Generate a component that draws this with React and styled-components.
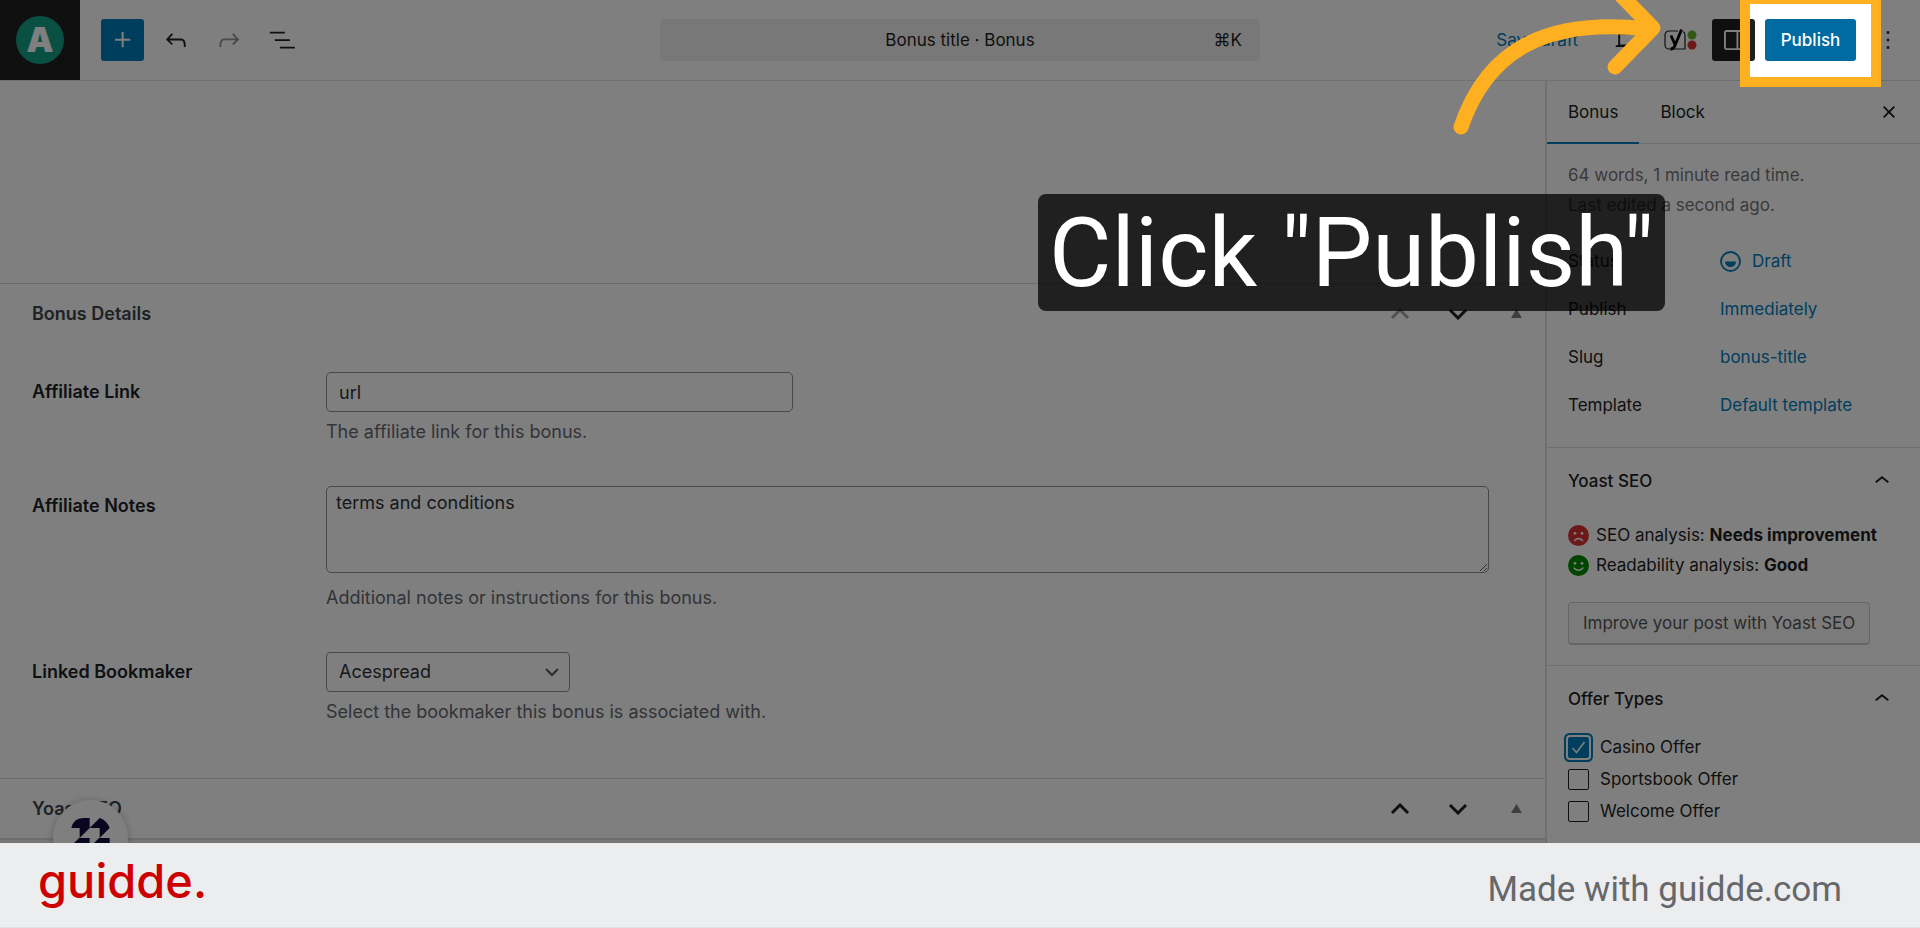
import React from "react";
import styled, { createGlobalStyle } from "styled-components";

const GlobalStyle = createGlobalStyle`
  *, *::before, *::after { box-sizing: border-box; }
  body {
    margin: 0;
    font-family: Inter, "Liberation Sans", sans-serif;
    font-size: 17px;
    line-height: 24px;
    color: #1e1e1e;
    background: #fff;
  }
  button, input, textarea, select { font: inherit; color: inherit; margin: 0; }
  h2, p, ul, dl, dd { margin: 0; padding: 0; }
`;

const Page = styled.div`
  display: flex;
  flex-direction: column;
  height: 100vh;
  min-height: 600px;
  overflow: hidden;
`;

const Editor = styled.div`
  position: relative;
  flex: 1;
  min-height: 0;
  display: flex;
  flex-direction: column;
  overflow: hidden;
`;

/* Top bar */
const TopBar = styled.header`
  display: grid;
  grid-template-columns: 1fr minmax(300px, 600px) 1fr;
  align-items: center;
  flex: none;
  height: 81px;
  border-bottom: 1px solid #e0e0e0;
`;

const Tools = styled.div`
  display: flex;
  align-items: center;
  gap: 10px;
  justify-content: ${(p) => (p.$end ? "flex-end" : "flex-start")};
  padding-right: ${(p) => (p.$end ? "11px" : "0")};
`;

const SiteLogo = styled.a`
  display: grid;
  place-items: center;
  width: 80px;
  height: 80px;
  margin-right: 11px;
  background: #1e1e1e;
  text-decoration: none;
`;

const SiteInitial = styled.span`
  display: grid;
  place-items: center;
  width: 48px;
  height: 48px;
  border-radius: 50%;
  background: #14a085;
  color: #fff;
  font: 900 34px/48px Inter, sans-serif;
`;

const ToolButton = styled.button`
  display: grid;
  place-items: center;
  width: 43px;
  height: 42px;
  padding: 0;
  border: 0;
  border-radius: 3px;
  background: ${(p) => p.$bg || "transparent"};
  color: ${(p) => p.$color || "#1e1e1e"};
`;

const CommandBar = styled.button`
  display: grid;
  grid-template-columns: 60px 1fr 60px;
  align-items: center;
  height: 42px;
  padding: 0 10px;
  border: 0;
  border-radius: 5px;
  background: #f0f0f0;
`;

const CommandHint = styled.span`
  text-align: right;
  padding-right: 8px;
  font-family: Inter, "DejaVu Sans", sans-serif;
`;

const LinkButton = styled.button`
  padding: ${(p) => p.$pad || "0"};
  border: 0;
  background: transparent;
  color: #007cba;
  display: flex;
  align-items: center;
  gap: 11px;
  white-space: nowrap;
`;

const PublishAnchor = styled.div`
  position: relative;
`;

const PublishButton = styled.button`
  display: block;
  width: 91px;
  height: 42px;
  padding: 0;
  border: 0;
  border-radius: 3px;
  background: #006ba1;
  color: #fff;
  font-weight: 500;
`;

/* Walkthrough layer: the spread shadow dims everything but the target */
const Spotlight = styled.div`
  position: absolute;
  z-index: 5;
  inset: -25px -25px -26px;
  border: 10px solid #ffb020;
  box-shadow: 0 0 0 4000px rgba(0, 0, 0, 0.5);
  pointer-events: none;
`;

const Arrow = styled.svg`
  position: absolute;
  z-index: 6;
  right: 176px;
  top: -19px;
  width: 240px;
  height: 140px;
  pointer-events: none;
`;

const Callout = styled.div`
  position: absolute;
  z-index: 6;
  right: 191px;
  top: 175px;
  padding: 2px 11px 0;
  border-radius: 8px;
  background: rgba(0, 0, 0, 0.75);
  color: #fff;
  font: 400 96px/115px Roboto, sans-serif;
  white-space: nowrap;
  pointer-events: none;
`;

/* Columns */
const Columns = styled.div`
  display: grid;
  grid-template-columns: minmax(0, 1fr) 375px;
  flex: 1;
  min-height: 0;
`;

const Main = styled.main`
  display: flex;
  flex-direction: column;
  font-size: 18px;
  min-height: 0;
`;

const Canvas = styled.div`
  flex: none;
  height: 202px;
`;

const Rest = styled.div`
  flex: 1;
  border-top: 2px solid #dcdcde;
  background: #f0f0f1;
`;

const BoxHeader = styled.div`
  display: flex;
  align-items: center;
  flex: none;
  height: 60px;
  padding-left: 32px;
  border-top: 1px solid #d5d6d8;
`;

const BoxTitle = styled.h2`
  flex: 1;
  font-size: 18px;
  font-weight: 600;
  color: #3c434a;
`;

const OrderButton = styled(ToolButton)`
  width: 58px;
`;

const Fields = styled.div`
  display: flex;
  flex-direction: column;
  gap: 42px;
  padding: 29px 56px 54px 32px;
`;

const Field = styled.div`
  display: grid;
  grid-template-columns: 294px minmax(0, 1fr);
`;

const Label = styled.label`
  font-weight: 600;
  line-height: 40px;
  color: #1d2327;
`;

const Control = styled.div`
  display: flex;
  flex-direction: column;
  align-items: flex-start;
  gap: 8px;
`;

const TextInput = styled.input`
  width: 467px;
  height: 40px;
  padding: 0 12px;
  border: 1px solid #8c8f94;
  border-radius: 5px;
  background: #fff;
  color: #2c3338;
`;

const TextArea = styled.textarea`
  width: 100%;
  height: 87px;
  margin-bottom: 5px;
  padding: 4px 9px;
  border: 1px solid #8c8f94;
  border-radius: 5px;
  background: #fff;
  color: #2c3338;
`;

const SelectWrap = styled.div`
  display: grid;
  align-items: center;
  width: 244px;
  & > * { grid-area: 1 / 1; }
  & > svg { justify-self: end; margin-right: 11px; pointer-events: none; }
`;

const Select = styled.select`
  appearance: none;
  width: 100%;
  height: 40px;
  padding: 0 12px;
  border: 1px solid #8c8f94;
  border-radius: 4px;
  background: #fff;
  color: #2c3338;
`;

const Help = styled.p`
  color: #646970;
`;

/* Sidebar */
const Sidebar = styled.aside`
  border-left: 2px solid #e0e0e0;
  background: #fff;
`;

const Tabs = styled.div`
  display: flex;
  align-items: center;
  height: 63px;
  padding-right: 10px;
  border-bottom: 1px solid #ddd;
`;

const Tab = styled.button`
  height: 63px;
  padding: 2px 21px 0;
  border: 0;
  border-bottom: 2px solid ${(p) => (p.$active ? "#007cba" : "transparent")};
  background: transparent;
`;

const Spacer = styled.span`
  flex: 1;
`;

const Summary = styled.section`
  padding: 16px 21px 18px;
`;

const Meta = styled.p`
  line-height: 30px;
  color: #757575;
`;

const Facts = styled.dl`
  display: grid;
  grid-template-columns: 152px 1fr;
  grid-auto-rows: 48px;
  align-items: center;
  margin-top: 17px;
`;

const Panel = styled.section`
  padding: 0 21px ${(p) => p.$bottom || "0"};
  border-top: 1px solid #ddd;
`;

const PanelToggle = styled.button`
  display: flex;
  align-items: center;
  justify-content: space-between;
  width: 100%;
  height: 65px;
  padding: 0 2px 0 0;
  border: 0;
  background: transparent;
  font-weight: 500;
`;

const Score = styled.p`
  display: flex;
  align-items: center;
  gap: 7px;
  line-height: 30px;
  white-space: nowrap;
`;

const ScoreList = styled.div`
  padding: 7px 0 22px;
`;

const ImproveButton = styled.button`
  height: 43px;
  padding: 0 14px;
  border: 1px solid #ccc;
  border-bottom-width: 2px;
  border-radius: 4px;
  background: #f7f7f7;
  color: #555;
  white-space: nowrap;
`;

const Choice = styled.label`
  display: flex;
  align-items: center;
  gap: 11px;
  height: 32px;
`;

const CheckCell = styled.span`
  display: grid;
  place-items: center;
  width: 21px;
  height: 21px;
  & > * { grid-area: 1 / 1; }
  & > svg { pointer-events: none; }
`;

const Checkbox = styled.input`
  appearance: none;
  width: 21px;
  height: 21px;
  border: 1px solid #1e1e1e;
  border-radius: 2px;
  &:checked {
    border-color: #007cba;
    background: #007cba;
    box-shadow: 0 0 0 2px #fff, 0 0 0 4px #007cba;
  }
`;

const HelpBubble = styled.button`
  position: absolute;
  left: 53px;
  bottom: -32px;
  width: 75px;
  height: 75px;
  padding: 0;
  border: 0;
  border-radius: 50%;
  background: #fff;
  box-shadow: 0 1px 8px rgba(0, 0, 0, 0.25);
`;

/* Footer */
const Footer = styled.footer`
  display: flex;
  align-items: center;
  justify-content: space-between;
  flex: none;
  height: 85px;
  padding: 0 78px 0 38px;
  background: #ecedef;
  border-bottom: 1px solid #e0e1e3;
`;

const Brand = styled.a`
  color: #cc0000;
  font: 500 47px/60px Inter, sans-serif;
  text-decoration: none;
  padding-bottom: 8px;
`;

const MadeWith = styled.span`
  color: #66676a;
  font: 400 35px/48px Roboto, sans-serif;
  padding-top: 10px;
`;

const Icon = ({ d, size = 30 }) => (
  <svg width={size} height={size} viewBox="0 0 24 24" fill="currentColor" aria-hidden="true">
    <path d={d} />
  </svg>
);

const ICONS = {
  plus: "M11 12.5V17.5H12.5V12.5H17.5V11H12.5V6H11V11H6V12.5H11Z",
  undo: "M18.3 11.7c-.6-.6-1.4-.9-2.3-.9H6.7l2.9-3.3-1.1-1-4.5 5L8.5 16l1-1-2.7-2.7H16c.5 0 .9.2 1.3.5 1 1 1 3.4 1 4.5v.3h1.5v-.2c0-1.5 0-4.3-1.5-5.7z",
  redo: "M15.6 6.5l-1.1 1 2.9 3.3H8c-.9 0-1.7.3-2.3.9-1.4 1.5-1.4 4.2-1.4 5.6v.2h1.5v-.3c0-1.1 0-3.5 1-4.5.3-.3.7-.5 1.3-.5h9.2L14.5 15l1.1 1.1 4.6-4.6-4.6-5z",
  list: "M2.300 5.300h12v1.500h-12zM6.300 11.300h12v1.500h-12zM10.300 17.300h12v1.500h-12z",
  desktop: "M20.5 16h-.7V8c0-1.1-.9-2-2-2H6.2c-1.1 0-2 .9-2 2v8h-.7c-.8 0-1.5.7-1.5 1.5h20c0-.8-.7-1.5-1.5-1.5zM5.7 8c0-.3.2-.5.5-.5h11.6c.3 0 .5.2.5.5v7.6H5.7V8z",
  drawer: "M18 4H6c-1.1 0-2 .9-2 2v12c0 1.1.9 2 2 2h12c1.1 0 2-.9 2-2V6c0-1.1-.9-2-2-2zm-4 14.5H6c-.3 0-.5-.2-.5-.5V6c0-.3.2-.5.5-.5h8v13zm4.5-.5c0 .3-.2.5-.5.5h-2.5v-13H18c.3 0 .5.2.5.5v12z",
  more: "M13 19h-2v-2h2v2zm0-6h-2v-2h2v2zm0-6h-2V5h2v2z",
  close: "M12 13.06l3.712 3.713 1.061-1.06L13.061 12l3.712-3.712-1.06-1.06L12 10.938 8.288 7.227l-1.061 1.06L10.939 12l-3.712 3.712 1.06 1.061L12 13.061z",
  up: "M6.5 12.4L12 8l5.5 4.4-.9 1.2L12 10l-4.5 3.6-1-1.2z",
};

const Chevron = ({ up }) => (
  <svg width="20" height="12" viewBox="0 0 20 12" fill="none" stroke="currentColor" strokeWidth="3" aria-hidden="true">
    <path d={up ? "M2 10l8-8 8 8" : "M2 2l8 8 8-8"} />
  </svg>
);

const Face = ({ color, mouth }) => (
  <svg width="21" height="21" viewBox="0 0 21 21" aria-hidden="true">
    <circle cx="10.500" cy="10.500" r="10.500" fill={color} />
    <circle cx="7" cy="8.300" r="1.400" fill="#fff" />
    <circle cx="14" cy="8.300" r="1.400" fill="#fff" />
    <path d={mouth} fill="none" stroke="#fff" strokeWidth="1.500" strokeLinecap="round" />
  </svg>
);

const YoastIcon = () => (
  <svg width="34" height="24" viewBox="0 0 34 24" aria-hidden="true">
    <path d="M14 3H5a4 4 0 0 0-4 4v10a4 4 0 0 0 4 4h16V7c0-2-1-3-2-3.600" fill="none" stroke="#1e1e1e" strokeWidth="1.200" />
    <path d="M7 7.500l4 9M17.500 1.500L11 17.500Q9.800 21 6.500 21" fill="none" stroke="#000" strokeWidth="2.800" />
    <circle cx="28" cy="7" r="4.500" fill="#64b42d" />
    <circle cx="28" cy="17" r="4.500" fill="#dc3232" />
  </svg>
);

function OrderControls({ first, name }) {
  return (
    <>
      <OrderButton aria-label={`Move ${name} up`} $color={first ? "#a0a5aa" : "#1d2327"}><Chevron up /></OrderButton>
      <OrderButton aria-label={`Move ${name} down`} $color="#1d2327"><Chevron /></OrderButton>
      <OrderButton aria-label={`Toggle ${name}`} $color="#787c82">
        <svg width="11" height="9" viewBox="0 0 11 9" fill="currentColor" aria-hidden="true"><path d="M5.500 0L11 9H0z" /></svg>
      </OrderButton>
    </>
  );
}

function Header() {
  return (
    <TopBar>
      <Tools>
        <SiteLogo href="#" aria-label="View posts"><SiteInitial>A</SiteInitial></SiteLogo>
        <ToolButton aria-label="Add block" $bg="#007cba" $color="#fff"><Icon d={ICONS.plus} size={32} /></ToolButton>
        <ToolButton aria-label="Undo"><Icon d={ICONS.undo} /></ToolButton>
        <ToolButton aria-label="Redo" $color="#949494"><Icon d={ICONS.redo} /></ToolButton>
        <ToolButton aria-label="Document overview"><Icon d={ICONS.list} /></ToolButton>
      </Tools>
      <CommandBar>
        <span />
        <span>Bonus title · Bonus</span>
        <CommandHint>⌘K</CommandHint>
      </CommandBar>
      <Tools $end>
        <LinkButton $pad="0 18px">Save draft</LinkButton>
        <ToolButton aria-label="View"><Icon d={ICONS.desktop} /></ToolButton>
        <ToolButton aria-label="Yoast SEO"><YoastIcon /></ToolButton>
        <ToolButton aria-label="Settings" $bg="#1e1e1e" $color="#fff"><Icon d={ICONS.drawer} /></ToolButton>
        <PublishAnchor>
          <PublishButton>Publish</PublishButton>
          <Spotlight />
          <Callout>Click "Publish"</Callout>
          <Arrow viewBox="0 0 240 140" fill="none" stroke="#ffb020" strokeWidth="15" strokeLinecap="round" strokeLinejoin="round">
            <path d="M21 127C48 48 108 18 208 29M174 -12L213 28L175 67" />
          </Arrow>
        </PublishAnchor>
        <ToolButton aria-label="Options"><Icon d={ICONS.more} /></ToolButton>
      </Tools>
    </TopBar>
  );
}

function MetaBoxes() {
  return (
    <Main>
      <Canvas />
      <BoxHeader>
        <BoxTitle>Bonus Details</BoxTitle>
        <OrderControls first name="Bonus Details" />
      </BoxHeader>
      <Fields>
        <Field>
          <Label htmlFor="link">Affiliate Link</Label>
          <Control>
            <TextInput id="link" defaultValue="url" />
            <Help>The affiliate link for this bonus.</Help>
          </Control>
        </Field>
        <Field>
          <Label htmlFor="notes">Affiliate Notes</Label>
          <Control>
            <TextArea id="notes" defaultValue="terms and conditions" />
            <Help>Additional notes or instructions for this bonus.</Help>
          </Control>
        </Field>
        <Field>
          <Label htmlFor="bookmaker">Linked Bookmaker</Label>
          <Control>
            <SelectWrap>
              <Select id="bookmaker"><option>Acespread</option></Select>
              <svg width="14" height="9" viewBox="0 0 14 9" fill="none" stroke="#50575e" strokeWidth="2" aria-hidden="true"><path d="M1 1l6 6 6-6" /></svg>
            </SelectWrap>
            <Help>Select the bookmaker this bonus is associated with.</Help>
          </Control>
        </Field>
      </Fields>
      <BoxHeader>
        <BoxTitle>Yoast SEO</BoxTitle>
        <OrderControls name="Yoast SEO" />
      </BoxHeader>
      <Rest />
    </Main>
  );
}

const OFFERS = [
  ["Casino Offer", true],
  ["Sportsbook Offer", false],
  ["Welcome Offer", false],
];

function Settings() {
  return (
    <Sidebar>
      <Tabs>
        <Tab $active>Bonus</Tab>
        <Tab>Block</Tab>
        <Spacer />
        <ToolButton aria-label="Close settings"><Icon d={ICONS.close} /></ToolButton>
      </Tabs>
      <Summary>
        <Meta>64 words, 1 minute read time.</Meta>
        <Meta>Last edited a second ago.</Meta>
        <Facts>
          <dt>Status</dt>
          <dd>
            <LinkButton>
              <svg width="21" height="21" viewBox="0 0 21 21" aria-hidden="true">
                <circle cx="10.500" cy="10.500" r="9.500" fill="none" stroke="currentColor" strokeWidth="1.800" />
                <path d="M5 10.500h11a5.500 5.500 0 0 1-11 0z" fill="currentColor" />
              </svg>
              Draft
            </LinkButton>
          </dd>
          <dt>Publish</dt>
          <dd><LinkButton>Immediately</LinkButton></dd>
          <dt>Slug</dt>
          <dd><LinkButton>bonus-title</LinkButton></dd>
          <dt>Template</dt>
          <dd><LinkButton>Default template</LinkButton></dd>
        </Facts>
      </Summary>
      <Panel $bottom="20px">
        <PanelToggle>Yoast SEO<Icon d={ICONS.up} /></PanelToggle>
        <ScoreList>
          <Score>
            <Face color="#dc3232" mouth="M6.500 15.500q4-4 8 0" />
            <span>SEO analysis: <b>Needs improvement</b></span>
          </Score>
          <Score>
            <Face color="#008a00" mouth="M6 13q4.500 4.500 9 0" />
            <span>Readability analysis: <b>Good</b></span>
          </Score>
        </ScoreList>
        <ImproveButton>Improve your post with Yoast SEO</ImproveButton>
      </Panel>
      <Panel>
        <PanelToggle>Offer Types<Icon d={ICONS.up} /></PanelToggle>
        {OFFERS.map(([name, on]) => (
          <Choice key={name}>
            <CheckCell>
              <Checkbox type="checkbox" defaultChecked={on} />
              {on && (
                <svg width="15" height="14" viewBox="0 0 15 14" fill="none" stroke="#fff" strokeWidth="1.600" aria-hidden="true">
                  <path d="M1.500 8l4 4.500L13.500 2" />
                </svg>
              )}
            </CheckCell>
            {name}
          </Choice>
        ))}
      </Panel>
    </Sidebar>
  );
}

export default function App() {
  return (
    <Page>
      <GlobalStyle />
      <Editor>
        <Header />
        <Columns>
          <MetaBoxes />
          <Settings />
        </Columns>
        <HelpBubble aria-label="Guides">
          <svg width="75" height="75" viewBox="0 0 225 225" fill="#130f40" aria-hidden="true">
            <path d="M55 84Q62 54 90 54H110V84L80 114V84ZM110 84L140 54Q162 62 170 84L140 114V84ZM56 136L78 114H110V144L80 174V144ZM116 136L138 114H170V144L140 174V144Z" />
          </svg>
        </HelpBubble>
      </Editor>
      <Footer>
        <Brand href="#">guidde.</Brand>
        <MadeWith>Made with guidde.com</MadeWith>
      </Footer>
    </Page>
  );
}
